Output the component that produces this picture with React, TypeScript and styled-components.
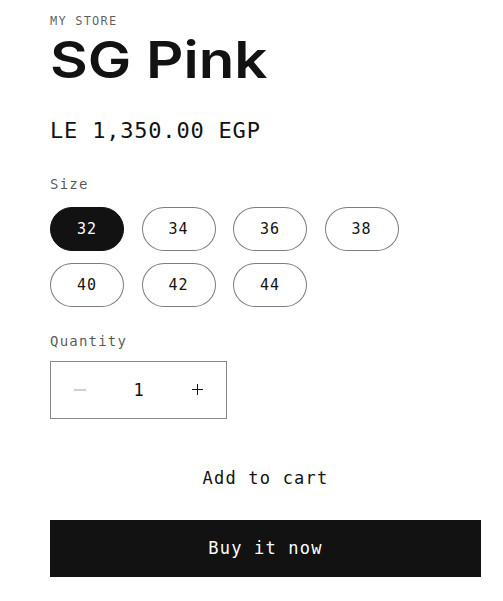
import React, { useState } from "react";
import styled, { createGlobalStyle } from "styled-components";

const GlobalStyle = createGlobalStyle`
  html, body { margin: 0; padding: 0; background: #ffffff; }
  body { font-family: "DejaVu Sans Mono", "Liberation Mono", monospace; color: #121212; }
  * { box-sizing: border-box; }
`;

const Page = styled.main`
  padding: 14px 22px 24px 50px;
  display: flex;
  flex-direction: column;
`;

const Vendor = styled.p`
  margin: 0;
  font-size: 12px;
  line-height: 14px;
  letter-spacing: 1.2px;
  text-transform: uppercase;
  color: rgba(18, 18, 18, 0.7);
`;

const Title = styled.h1`
  margin: 1.5px 0 0;
  font-family: Inter, "Liberation Sans", sans-serif;
  font-weight: 600;
  font-size: 51px;
  line-height: 60px;
  letter-spacing: 0;
  color: #121212;
  span {
    display: inline-block;
    transform: scaleX(1.14);
    transform-origin: left center;
  }
`;

const Price = styled.div`
  margin-top: 26px;
  font-size: 22px;
  line-height: 30px;
  letter-spacing: 0.8px;
  color: #121212;
`;

const FieldLabel = styled.div<{ $mt: number }>`
  margin-top: ${(p) => p.$mt}px;
  font-size: 14px;
  line-height: 20px;
  letter-spacing: 1.2px;
  color: rgba(18, 18, 18, 0.72);
`;

const PillGrid = styled.div`
  margin-top: 13px;
  display: flex;
  flex-wrap: wrap;
  column-gap: 17.5px;
  row-gap: 12px;
`;

const Pill = styled.button<{ $active: boolean }>`
  width: 74px;
  height: 44px;
  border-radius: 22px;
  border: 1px solid ${(p) => (p.$active ? "#121212" : "rgba(18,18,18,0.55)")};
  background: ${(p) => (p.$active ? "#121212" : "#ffffff")};
  color: ${(p) => (p.$active ? "#ffffff" : "#121212")};
  font-family: "DejaVu Sans Mono", monospace;
  font-size: 15px;
  letter-spacing: 1px;
  padding: 0;
  display: flex;
  align-items: center;
  justify-content: center;
  cursor: pointer;
`;

const QtyBox = styled.div`
  margin-top: 10px;
  width: 177px;
  height: 58px;
  border: 1px solid rgba(18, 18, 18, 0.5);
  display: grid;
  grid-template-columns: 58px 1fr 58px;
`;

const QtyButton = styled.button<{ $disabled?: boolean }>`
  border: none;
  background: transparent;
  padding: 0;
  display: flex;
  align-items: center;
  justify-content: center;
  color: ${(p) => (p.$disabled ? "rgba(18,18,18,0.4)" : "#121212")};
  cursor: pointer;
`;

const QtyValue = styled.div`
  display: flex;
  align-items: center;
  justify-content: center;
  font-size: 17px;
  color: #121212;
`;

const Buttons = styled.div`
  margin-top: 31px;
  display: flex;
  flex-direction: column;
  gap: 13px;
`;

const ActionButton = styled.button<{ $primary?: boolean }>`
  height: 57px;
  width: 100%;
  border: none;
  background: ${(p) => (p.$primary ? "#121212" : "#ffffff")};
  color: ${(p) => (p.$primary ? "#ffffff" : "#121212")};
  font-family: "DejaVu Sans Mono", monospace;
  font-size: 17px;
  letter-spacing: 1.2px;
  display: flex;
  align-items: center;
  justify-content: center;
  cursor: pointer;
  padding: 0;
`;

const sizes = ["32", "34", "36", "38", "40", "42", "44"];

const Minus = () => (
  <svg width="12" height="2" viewBox="0 0 12 2" aria-hidden="true">
    <rect x="0" y="0.5" width="12" height="1" fill="currentColor" />
  </svg>
);

const Plus = () => (
  <svg width="11" height="11" viewBox="0 0 11 11" aria-hidden="true">
    <rect x="0" y="5" width="11" height="1" fill="currentColor" />
    <rect x="5" y="0" width="1" height="11" fill="currentColor" />
  </svg>
);

export default function App() {
  const [size, setSize] = useState("32");
  const [qty, setQty] = useState(1);
  return (
    <>
      <GlobalStyle />
      <Page>
        <Vendor>My Store</Vendor>
        <Title>
          <span>SG Pink</span>
        </Title>
        <Price>LE 1,350.00 EGP</Price>
        <FieldLabel $mt={28}>Size</FieldLabel>
        <PillGrid>
          {sizes.map((s) => (
            <Pill key={s} $active={s === size} onClick={() => setSize(s)}>
              {s}
            </Pill>
          ))}
        </PillGrid>
        <FieldLabel $mt={24}>Quantity</FieldLabel>
        <QtyBox>
          <QtyButton
            $disabled={qty <= 1}
            aria-label="Decrease quantity"
            onClick={() => setQty((q) => Math.max(1, q - 1))}
          >
            <Minus />
          </QtyButton>
          <QtyValue>{qty}</QtyValue>
          <QtyButton aria-label="Increase quantity" onClick={() => setQty((q) => q + 1)}>
            <Plus />
          </QtyButton>
        </QtyBox>
        <Buttons>
          <ActionButton>Add to cart</ActionButton>
          <ActionButton $primary>Buy it now</ActionButton>
        </Buttons>
      </Page>
    </>
  );
}
